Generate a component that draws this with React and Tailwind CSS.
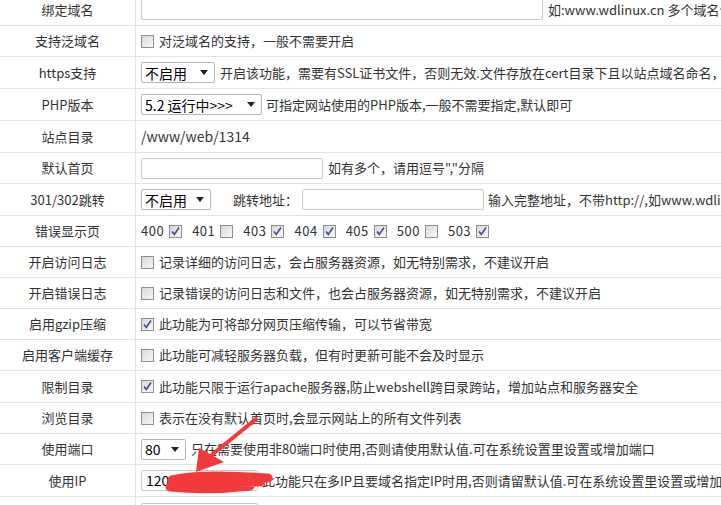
import React from "react";

const F = { fontFamily: '"Noto Sans CJK SC", "Noto Sans", sans-serif' };

function Cb({ checked }) {
  return (
    <span className="inline-flex w-[13px] h-[13px] shrink-0 border border-[#8f8f8f] bg-gradient-to-br from-[#d8d8d8] to-[#f8f8f8] items-center justify-center">
      {checked && (
        <svg width="11" height="11" viewBox="0 0 11 11">
          <path d="M2 5.5 L4.3 8.5 L9 1.5" fill="none" stroke="#3c4f91" strokeWidth="1.6" />
        </svg>
      )}
    </span>
  );
}

function Sel({ w, children }) {
  return (
    <span
      className="inline-flex items-center justify-between h-[21px] border border-[#b5b5b5] rounded-[2px] bg-white pl-[3px] pr-[6px] text-[14px] text-black shrink-0"
      style={{ width: w }}
    >
      <span className="whitespace-nowrap leading-none">{children}</span>
      <svg width="8" height="5" viewBox="0 0 8 5"><path d="M0 0 H8 L4 5 Z" fill="#222" /></svg>
    </span>
  );
}

function Inp({ w, children }) {
  return (
    <span
      className="inline-flex items-center h-[21px] border border-[#c9c9c9] rounded-[2px] bg-white pl-[4px] text-[14px] text-black shrink-0"
      style={{ width: w }}
    >
      {children}
    </span>
  );
}

function Row({ h, label, children }) {
  return (
    <div className="flex border-b border-[#e3e3e6]" style={{ height: h }}>
      <div className="w-[136px] shrink-0 border-r border-[#e3e3e6] flex items-center justify-center text-[13px] text-[#333]">
        {label}
      </div>
      <div className="flex-1 flex items-center pl-[5px] text-[13px] text-[#333] whitespace-nowrap overflow-hidden">
        {children}
      </div>
    </div>
  );
}

function CbText({ checked, children }) {
  return (
    <>
      <Cb checked={checked} />
      <span className="ml-[5px]">{children}</span>
    </>
  );
}

function Code({ n, c, first }) {
  return (
    <>
      <span className={first ? "tracking-[0.5px]" : "ml-[10px] tracking-[0.5px]"}>{n}</span>
      <span className="ml-[5px] inline-flex"><Cb checked={c} /></span>
    </>
  );
}

export default function App() {
  return (
    <div className="relative w-[721px] h-[505px] overflow-hidden bg-white" style={F}>
      <div className="mt-[-6px]">
        <Row h={32} label="绑定域名">
          <Inp w={402}></Inp>
          <span className="ml-[5px]">如:www.wdlinux.cn 多个域名请用逗号分隔</span>
        </Row>
        <Row h={31} label="支持泛域名">
          <CbText>对泛域名的支持，一般不需要开启</CbText>
        </Row>
        <Row h={32} label="https支持">
          <Sel w={74}>不启用</Sel>
          <span className="ml-[5px]">开启该功能，需要有SSL证书文件，否则无效.文件存放在cert目录下且以站点域名命名，</span>
        </Row>
        <Row h={32} label="PHP版本">
          <Sel w={121}>5.2 运行中&gt;&gt;&gt;</Sel>
          <span className="ml-[4px]">可指定网站使用的PHP版本,一般不需要指定,默认即可</span>
        </Row>
        <Row h={32} label="站点目录">
          <span className="text-[14px]">/www/web/1314</span>
        </Row>
        <Row h={31} label="默认首页">
          <Inp w={182}></Inp>
          <span className="ml-[5px]">如有多个，请用逗号","分隔</span>
        </Row>
        <Row h={32} label="301/302跳转">
          <Sel w={70}>不启用</Sel>
          <span className="ml-[22px]">跳转地址：</span>
          <span className="ml-[4px] inline-flex"><Inp w={182}></Inp></span>
          <span className="ml-[4px]">输入完整地址，不带http://,如www.wdlinux.cn</span>
        </Row>
        <Row h={31} label="错误显示页">
          <Code n="400" c first />
          <Code n="401" />
          <Code n="403" c />
          <Code n="404" c />
          <Code n="405" c />
          <Code n="500" />
          <Code n="503" c />
        </Row>
        <Row h={31} label="开启访问日志">
          <CbText>记录详细的访问日志，会占服务器资源，如无特别需求，不建议开启</CbText>
        </Row>
        <Row h={31} label="开启错误日志">
          <CbText>记录错误的访问日志和文件，也会占服务器资源，如无特别需求，不建议开启</CbText>
        </Row>
        <Row h={31} label="启用gzip压缩">
          <CbText checked>此功能为可将部分网页压缩传输，可以节省带宽</CbText>
        </Row>
        <Row h={31} label="启用客户端缓存">
          <CbText>此功能可减轻服务器负载，但有时更新可能不会及时显示</CbText>
        </Row>
        <Row h={32} label="限制目录">
          <CbText checked>此功能只限于运行apache服务器,防止webshell跨目录跨站，增加站点和服务器安全</CbText>
        </Row>
        <Row h={31} label="浏览目录">
          <CbText>表示在没有默认首页时,会显示网站上的所有文件列表</CbText>
        </Row>
        <Row h={31} label="使用端口">
          <Sel w={45}>80</Sel>
          <span className="ml-[5px]">只在需要使用非80端口时使用,否则请使用默认值.可在系统设置里设置或增加端口</span>
        </Row>
        <Row h={32} label="使用IP">
          <Inp w={117}>120.000.000.000</Inp>
          <span className="ml-[4px]">此功能只在多IP且要域名指定IP时用,否则请留默认值.可在系统设置里设置或增加IP</span>
        </Row>
        <div className="flex h-[40px]">
          <div className="w-[136px] shrink-0 border-r border-[#e3e3e6]"></div>
          <div className="flex-1 pl-[5px] pt-[6px]">
            <Inp w={117}></Inp>
          </div>
        </div>
      </div>
      <svg className="absolute left-0 top-0 pointer-events-none" width="721" height="505" viewBox="0 0 721 505">
        <path d="M256 419 L208 458" stroke="#f33a3a" strokeWidth="4" strokeLinecap="round" />
        <path d="M196 472 L199 448 L224 462 Z" fill="#f33a3a" />
        <path d="M172 480 C200 474 230 476 268 478 M170 487 C200 490 225 489 250 486 M180 483 L260 482" stroke="#f33a3a" strokeWidth="9" strokeLinecap="round" fill="none" />
      </svg>
    </div>
  );
}
